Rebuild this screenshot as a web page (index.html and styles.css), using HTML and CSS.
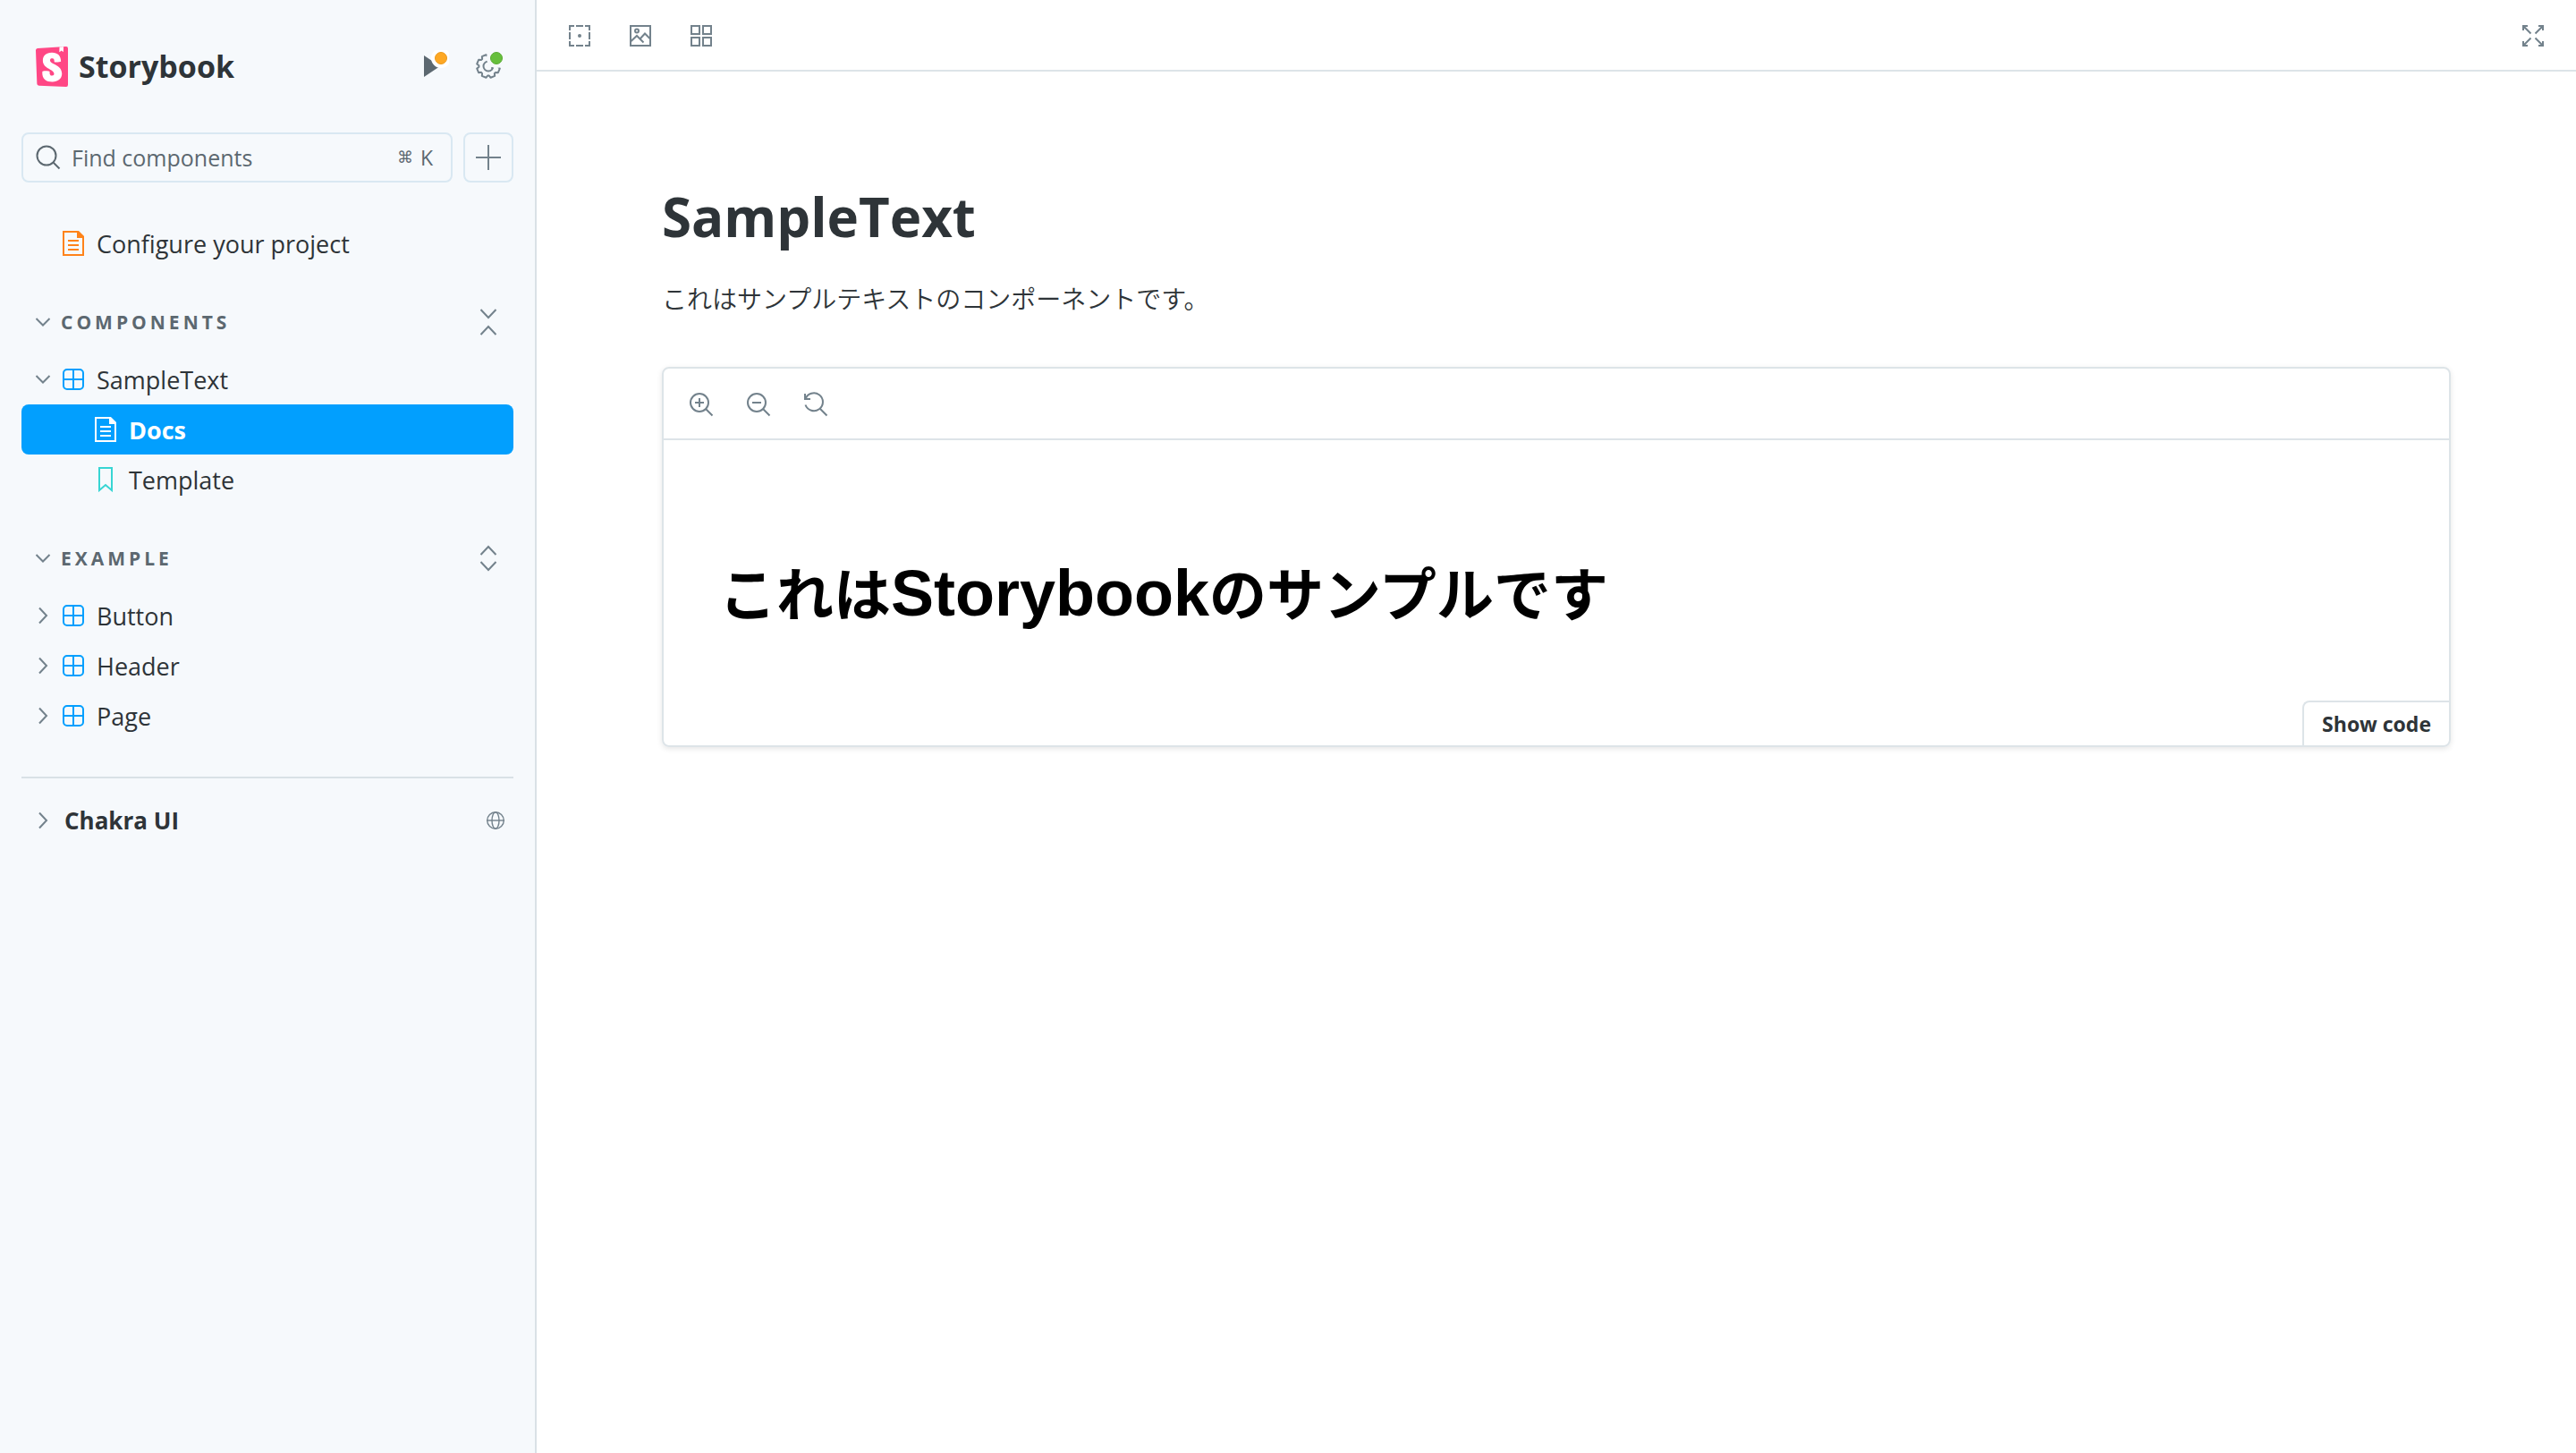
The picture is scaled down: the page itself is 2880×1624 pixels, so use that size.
FILE: index.html
```html
<!DOCTYPE html>
<html lang="ja">
<head>
    <meta charset="UTF-8">
    <meta name="viewport" content="width=device-width, initial-scale=1.0">
    <title>SampleText - Docs ⋅ Storybook</title>
    <link rel="stylesheet" href="styles.css">
</head>
<body>
    <!-- shared icons -->
    <svg class="sprite" aria-hidden="true">
        <symbol id="i-down" viewBox="0 0 18 12"><path d="M1.5 2 9 9.5 16.5 2"/></symbol>
        <symbol id="i-right" viewBox="0 0 12 20"><path d="M2 1.5 10 10 2 18.5"/></symbol>
        <symbol id="i-doc" viewBox="0 0 24 28">
            <path d="M1 1h16.500L23 6.500V27H1z"/>
            <path d="M17 1v6h6z" fill="currentColor"/>
            <path d="M6 11h12M6 16h12M6 21h12"/>
        </symbol>
        <symbol id="i-component" viewBox="0 0 24 24">
            <rect x="1" y="1" width="22" height="22" rx="4"/>
            <path d="M12 1v22M1 12h22"/>
        </symbol>
        <symbol id="i-bookmark" viewBox="0 0 16 28"><path d="M1 1h14v25l-7-6-7 6z"/></symbol>
    </svg>

    <div class="layout">
        <aside class="sidebar">
            <header class="brand-row">
                <a class="brand" href="#">
                    <svg class="logo" viewBox="0 0 32 40" aria-hidden="true">
                        <path fill="#ff4785" d="M1.200 36.700 0 3.900C0 2.800.8 1.900 1.900 1.800l28-1.800A2 2 0 0 1 32 2v36a2 2 0 0 1-2.100 2L3.200 38.800a2 2 0 0 1-2-2.100z"/>
                        <path fill="#fff" d="m27.600.2-4 .200-.2 4.800c0 .3.300.4.500.200L25.500 4l1.400 1.200c.2.200.500 0 .5-.2z"/>
                        <path fill="#fff" d="M18.400 15.100c0 .9 5.800.4 6.600-.2 0-5.900-3.200-8.900-9-8.900s-9 3.100-9 7.900c0 8.300 11.200 8.400 11.200 13 0 1.200-.6 2-2 2-1.800 0-2.500-1-2.400-4.100 0-.7-7.100-1-7.300 0-.6 7.900 4.300 10.200 9.900 10.200 5.400 0 9.600-2.900 9.600-8.100 0-9.300-11.800-9-11.800-13.200 0-1.700 1.300-1.900 2-1.900.8 0 2.400.1 2.200 3.300z"/>
                    </svg>
                    <span>Storybook</span>
                </a>
                <button class="icon-btn" aria-label="Onboarding">
                    <svg width="32" height="36" viewBox="0 0 32 36">
                        <path fill="#5c6870" d="M4 6 22 18 4 30z"/>
                        <circle cx="23" cy="9" r="11" fill="#fff"/>
                        <circle cx="23" cy="9" r="6.500" fill="#fea824" stroke="#ec9a1c"/>
                    </svg>
                </button>
                <button class="icon-btn" aria-label="Settings">
                    <svg width="32" height="36" viewBox="0 0 32 36">
                        <mask id="cut"><path d="M0 0h32v36H0z" fill="#fff"/><circle cx="25" cy="9" r="11" fill="#000"/></mask>
                        <g mask="url(#cut)" fill="none" stroke="#73828c" stroke-width="2" stroke-linejoin="round">
                            <path transform="translate(2 4) rotate(22.5 14 14)" d="M26.800 11.500v5l-2.700.8-.7 1.500 1.400 2.500-3.500 3.500-2.500-1.400-1.500.7-.8 2.700h-5l-.8-2.700-1.500-.7-2.500 1.400-3.500-3.500 1.400-2.500-.7-1.500-2.700-.8v-5l2.700-.8.7-1.500-1.400-2.500 3.500-3.500 2.500 1.400 1.500-.7.8-2.700h5l.8 2.700 1.500.7 2.500-1.400 3.500 3.500-1.400 2.500.7 1.500z"/>
                            <circle cx="16" cy="18" r="5.500"/>
                        </g>
                        <circle cx="20" cy="20" r="1" fill="#73828c"/>
                        <circle cx="25" cy="9" r="6.500" fill="#66bf3c" stroke="#5aaa34"/>
                    </svg>
                </button>
            </header>

            <div class="search-row">
                <div class="search-box">
                    <svg class="line search-icon" width="28" height="28" viewBox="0 0 28 28"><circle cx="12" cy="12" r="10.500"/><path d="m19.500 19.500 7 7"/></svg>
                    <input type="text" id="search" aria-label="Find components" placeholder="Find components">
                    <label class="shortcut" for="search"><span>⌘</span> K</label>
                </div>
                <button class="add-btn" aria-label="Create a new story">
                    <svg class="line" width="28" height="28" viewBox="0 0 28 28"><path d="M14 0v28M0 14h28"/></svg>
                </button>
            </div>

            <nav class="tree">
                <a class="item" href="#"><span class="caret"></span><svg class="line type orange" width="24" height="28"><use href="#i-doc"/></svg>Configure your project</a>

                <div class="group">
                    <button class="group-title"><span class="caret"><svg class="line" width="18" height="12"><use href="#i-down"/></svg></span>COMPONENTS</button>
                    <button class="icon-btn" aria-label="Collapse all">
                        <svg class="line" width="20" height="30" viewBox="0 0 20 30"><path d="m1.500 1 8.500 9 8.500-9M1.500 29l8.500-9 8.500 9"/></svg>
                    </button>
                </div>
                <a class="item" href="#"><span class="caret"><svg class="line" width="18" height="12"><use href="#i-down"/></svg></span><svg class="line type blue" width="24" height="24"><use href="#i-component"/></svg>SampleText</a>
                <a class="item child selected" href="#"><svg class="line type" width="24" height="28"><use href="#i-doc"/></svg>Docs</a>
                <a class="item child" href="#"><svg class="line type teal" width="24" height="28"><use href="#i-bookmark"/></svg>Template</a>

                <div class="group">
                    <button class="group-title"><span class="caret"><svg class="line" width="18" height="12"><use href="#i-down"/></svg></span>EXAMPLE</button>
                    <button class="icon-btn" aria-label="Expand all">
                        <svg class="line" width="20" height="30" viewBox="0 0 20 30"><path d="m1.500 11 8.500-9 8.500 9M1.500 19l8.500 9 8.500-9"/></svg>
                    </button>
                </div>
                <a class="item" href="#"><span class="caret"><svg class="line" width="12" height="20"><use href="#i-right"/></svg></span><svg class="line type blue" width="24" height="24"><use href="#i-component"/></svg>Button</a>
                <a class="item" href="#"><span class="caret"><svg class="line" width="12" height="20"><use href="#i-right"/></svg></span><svg class="line type blue" width="24" height="24"><use href="#i-component"/></svg>Header</a>
                <a class="item" href="#"><span class="caret"><svg class="line" width="12" height="20"><use href="#i-right"/></svg></span><svg class="line type blue" width="24" height="24"><use href="#i-component"/></svg>Page</a>
            </nav>

            <div class="ref">
                <button class="ref-title"><span class="caret"><svg class="line" width="12" height="20"><use href="#i-right"/></svg></span>Chakra UI</button>
                <button class="icon-btn" aria-label="Open external storybook">
                    <svg class="line thin" width="20" height="24" viewBox="0 0 20 24"><circle cx="10" cy="12" r="9.300"/><ellipse cx="10" cy="12" rx="4" ry="9.300"/><path d="M0 12h20"/></svg>
                </button>
            </div>
        </aside>

        <main class="main">
            <div class="toolbar">
                <button class="icon-btn" aria-label="Outline">
                    <svg class="line" width="24" height="24" viewBox="0 0 24 24"><path d="M1 6V1h5M8 1h8M18 1h5v5M23 8v8M23 18v5h-5M16 23H8M6 23H1v-5M1 16V8"/><circle cx="12" cy="12" r="2" class="fill"/></svg>
                </button>
                <button class="icon-btn" aria-label="Change background">
                    <svg class="line" width="24" height="24" viewBox="0 0 24 24"><rect x="1" y="1" width="22" height="22"/><circle cx="8" cy="6.500" r="2"/><path d="m1 18.500 7-6.500 7.500 7.500M11.500 15.500l5.500-6 6 6"/></svg>
                </button>
                <button class="icon-btn" aria-label="Grid">
                    <svg class="line" width="24" height="24" viewBox="0 0 24 24"><path d="M1 1h9v9H1zM14 1h9v9h-9zM1 14h9v9H1zM14 14h9v9h-9z"/></svg>
                </button>
                <button class="icon-btn fullscreen" aria-label="Go full screen">
                    <svg class="line" width="24" height="24" viewBox="0 0 24 24"><path d="M1 6V1h5M1 1l8.500 8.500M18 1h5v5M23 1l-8.500 8.500M1 18v5h5M1 23l8.500-8.500M18 23h5v-5M23 23l-8.500-8.500"/></svg>
                </button>
            </div>

            <div class="docs">
                <h1>SampleText</h1>
                <p>これはサンプルテキストのコンポーネントです。</p>

                <section class="preview">
                    <div class="preview-bar">
                        <button class="icon-btn" aria-label="Zoom in">
                            <svg class="line" width="28" height="28" viewBox="0 0 28 28"><circle cx="12" cy="12" r="10"/><path d="m19 19 7.500 7.500M12 7v10M7 12h10"/></svg>
                        </button>
                        <button class="icon-btn" aria-label="Zoom out">
                            <svg class="line" width="28" height="28" viewBox="0 0 28 28"><circle cx="12" cy="12" r="10"/><path d="m19 19 7.500 7.500M7 12h10"/></svg>
                        </button>
                        <button class="icon-btn" aria-label="Reset zoom">
                            <svg class="line" width="28" height="28" viewBox="0 0 28 28"><path d="M2.500 14.500A10 10 0 1 0 2.500 8M2 2v6h6M19 19l7.500 7.500"/></svg>
                        </button>
                    </div>
                    <div class="story">
                        <h2>これは<span class="latin">Storybook</span>のサンプルです</h2>
                    </div>
                    <button class="show-code">Show code</button>
                </section>
            </div>
        </main>
    </div>
</body>
</html>
```
FILE: styles.css
```css
* {
    box-sizing: border-box;
}
body {
    margin: 0;
    font-family: "Open Sans", "Noto Sans CJK JP", sans-serif;
    font-size: 27px;
    color: #2e3438;
    background: #fff;
}
button {
    font: inherit;
    color: inherit;
    background: none;
    border: none;
    padding: 0;
    cursor: pointer;
}
a {
    color: inherit;
    text-decoration: none;
}
svg {
    display: block;
    flex-shrink: 0;
}
.sprite {
    display: none;
}
.line {
    fill: none;
    stroke: currentColor;
    stroke-width: 2;
}
.thin {
    stroke-width: 1.4;
}
.fill {
    fill: currentColor;
    stroke: none;
}
.icon-btn {
    display: flex;
    align-items: center;
    justify-content: center;
    color: #73828c;
}
.layout {
    display: flex;
    min-height: 100vh;
}

/* sidebar */
.sidebar {
    width: 600px;
    flex-shrink: 0;
    padding: 48px 24px;
    background: #f6f9fc;
    border-right: 2px solid #d9e1e6;
}
.brand-row {
    display: flex;
    align-items: center;
    gap: 28px;
    height: 52px;
    padding: 0 12px 0 16px;
    margin-bottom: 48px;
}
.brand {
    display: flex;
    align-items: center;
    gap: 12px;
    margin-right: auto;
    font-size: 34px;
    font-weight: bold;
}
.logo {
    width: 36px;
    height: 45px;
}
.search-row {
    display: flex;
    gap: 12px;
    margin-bottom: 40px;
}
.search-box {
    flex: 1;
    display: flex;
    align-items: center;
    height: 56px;
    padding: 0 20px 0 14px;
    border: 2px solid #d9e8f2;
    border-radius: 8px;
    font-size: 25px;
    color: #5c6870;
}
.search-box input {
    flex: 1;
    min-width: 0;
    padding: 0 12px;
    border: none;
    outline: none;
    background: none;
    font: inherit;
}
.search-box input::placeholder {
    color: #5c6870;
    opacity: 1;
}
.shortcut {
    display: flex;
    align-items: center;
    gap: 8px;
    font-size: 23px;
    line-height: 30px;
}
.shortcut span {
    font-family: "DejaVu Sans", sans-serif;
    font-size: 18px;
}
.add-btn {
    display: flex;
    align-items: center;
    justify-content: center;
    width: 56px;
    border: 2px solid #d9e8f2;
    border-radius: 8px;
    color: #73828c;
}
.item {
    display: flex;
    align-items: center;
    height: 56px;
    padding-left: 15px;
    border-radius: 8px;
}
.caret {
    display: flex;
    justify-content: center;
    width: 18px;
    color: #73828c;
}
.type {
    margin: 0 14px 0 13px;
}
.child {
    padding-left: 69px;
}
.orange {
    color: #ff8319;
}
.blue {
    color: #029ffe;
}
.teal {
    color: #37d5d3;
}
.selected {
    background: #029ffe;
    color: #fff;
    font-weight: bold;
}
.group {
    display: flex;
    align-items: center;
    justify-content: space-between;
    height: 56px;
    margin: 32px 0 8px;
    padding: 0 18px 0 15px;
}
.group-title {
    display: flex;
    align-items: center;
    gap: 11px;
    font-size: 21px;
    font-weight: bold;
    letter-spacing: 4px;
    color: #5c6870;
}
.ref {
    display: flex;
    align-items: center;
    justify-content: space-between;
    margin-top: 40px;
    padding: 24px 10px 0 15px;
    border-top: 2px solid #d9e1e6;
}
.ref-title {
    display: flex;
    align-items: center;
    gap: 15px;
    height: 46px;
    font-size: 26px;
    font-weight: bold;
}

/* main */
.main {
    flex: 1;
}
.toolbar {
    display: flex;
    align-items: center;
    gap: 44px;
    height: 80px;
    padding: 2px 36px 0;
    border-bottom: 2px solid #dde4e8;
}
.fullscreen {
    margin-left: auto;
}
.docs {
    max-width: 2080px;
    margin: 0 auto;
    padding: 126px 40px;
}
.docs h1 {
    margin: 0 0 30px;
    font-size: 60px;
    line-height: 72px;
}
.docs p {
    margin: 0 0 50px;
    font-size: 28px;
    font-weight: 350;
    line-height: 52px;
}
.preview {
    border: 2px solid #dde4e8;
    border-radius: 8px;
    box-shadow: 0 2px 6px rgba(0, 0, 0, 0.1);
}
.preview-bar {
    display: flex;
    align-items: center;
    gap: 36px;
    height: 80px;
    padding: 2px 28px 0;
    border-bottom: 2px solid #dde4e8;
}
.story {
    padding: 120px 62px 72px;
}
.story h2 {
    margin: 0;
    font-family: "Noto Sans CJK JP", sans-serif;
    font-size: 64px;
    line-height: 96px;
    color: #000;
}
.latin {
    font-family: "Liberation Sans", sans-serif;
    font-size: 72px;
}
.show-code {
    display: block;
    margin-left: auto;
    height: 50px;
    padding: 0 20px;
    border: solid #dde4e8;
    border-width: 2px 0 0 2px;
    border-radius: 8px 0 0 0;
    font-size: 23px;
    font-weight: bold;
}
```
